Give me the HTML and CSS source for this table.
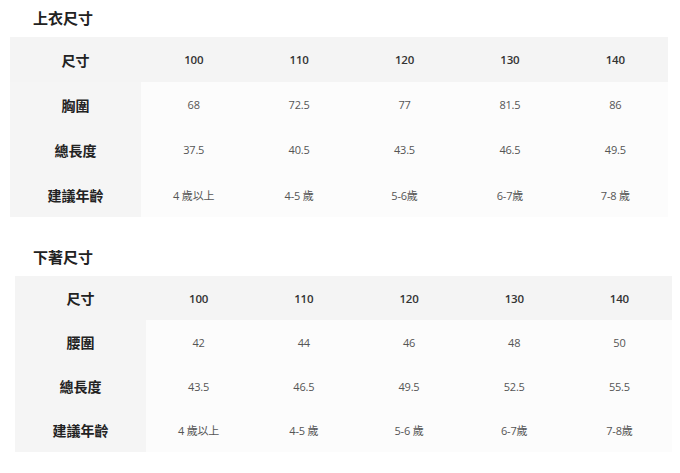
FILE: index.html
```html
<!DOCTYPE html>
<html lang="zh-Hant">
<head>
<meta charset="utf-8">
<link rel="stylesheet" href="styles.css">
</head>
<body>
<section class="block block-top">
  <h2 class="title">上衣尺寸</h2>
  <div class="grid">
    <div class="cell head label">尺寸</div>
    <div class="cell head">100</div>
    <div class="cell head">110</div>
    <div class="cell head">120</div>
    <div class="cell head">130</div>
    <div class="cell head">140</div>

    <div class="cell label">胸圍</div>
    <div class="cell">68</div>
    <div class="cell">72.5</div>
    <div class="cell">77</div>
    <div class="cell">81.5</div>
    <div class="cell">86</div>

    <div class="cell label">總長度</div>
    <div class="cell">37.5</div>
    <div class="cell">40.5</div>
    <div class="cell">43.5</div>
    <div class="cell">46.5</div>
    <div class="cell">49.5</div>

    <div class="cell label">建議年齡</div>
    <div class="cell">4 歲以上</div>
    <div class="cell">4-5 歲</div>
    <div class="cell">5-6歲</div>
    <div class="cell">6-7歲</div>
    <div class="cell">7-8 歲</div>
  </div>
</section>

<section class="block block-bottom">
  <h2 class="title">下著尺寸</h2>
  <div class="grid grid-b">
    <div class="cell head label">尺寸</div>
    <div class="cell head">100</div>
    <div class="cell head">110</div>
    <div class="cell head">120</div>
    <div class="cell head">130</div>
    <div class="cell head">140</div>

    <div class="cell label">腰圍</div>
    <div class="cell">42</div>
    <div class="cell">44</div>
    <div class="cell">46</div>
    <div class="cell">48</div>
    <div class="cell">50</div>

    <div class="cell label">總長度</div>
    <div class="cell">43.5</div>
    <div class="cell">46.5</div>
    <div class="cell">49.5</div>
    <div class="cell">52.5</div>
    <div class="cell">55.5</div>

    <div class="cell label">建議年齡</div>
    <div class="cell">4 歲以上</div>
    <div class="cell">4-5 歲</div>
    <div class="cell">5-6 歲</div>
    <div class="cell">6-7歲</div>
    <div class="cell">7-8歲</div>
  </div>
</section>
</body>
</html>
```

FILE: styles.css
```css
html, body {
  margin: 0;
  padding: 0;
  background: #ffffff;
}

body {
  font-family: "Open Sans", "Noto Sans CJK TC", sans-serif;
  color: #555;
  width: 680px;
}

.title {
  margin: 0;
  height: 37px;
  line-height: 35px;
  font-family: "Noto Sans CJK TC", sans-serif;
  font-size: 15px;
  font-weight: 700;
  color: #222;
}

.block-top {
  padding-left: 10px;
  width: 658px;
}

.block-top .title {
  padding-left: 23px;
}

.block-bottom {
  margin-top: 22px;
  padding-left: 15px;
  width: 657px;
}

.block-bottom .title {
  padding-left: 18px;
}

.grid {
  display: grid;
  grid-template-columns: 131px repeat(5, 1fr);
  grid-auto-rows: 45px;
  background: #fcfcfc;
}

.grid-b {
  grid-auto-rows: 44px;
}

.cell {
  display: flex;
  align-items: center;
  justify-content: center;
  font-size: 11px;
  letter-spacing: -0.2px;
  color: #555;
  background: #fcfcfc;
}

.head {
  background: #f4f4f4;
  font-weight: 600;
  font-size: 11.5px;
  color: #333;
}

.label {
  background: #f5f5f5;
  font-family: "Noto Sans CJK TC", sans-serif;
  font-weight: 700;
  font-size: 14px;
  letter-spacing: 0;
  color: #222;
}

.head.label {
  background: #f4f4f4;
}
```
